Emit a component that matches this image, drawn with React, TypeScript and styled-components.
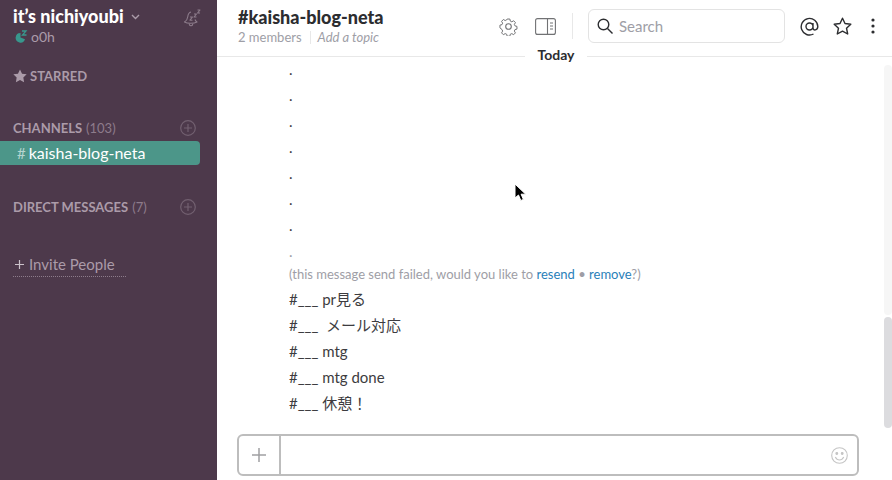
import React from 'react';
import styled, { createGlobalStyle } from 'styled-components';

const GlobalStyle = createGlobalStyle`
  html, body, #root {
    margin: 0;
    height: 100%;
  }
  body {
    overflow: hidden;
    font-family: Lato, "Noto Sans CJK JP", sans-serif;
    background: #fff;
  }
`;

const Page = styled.div`
  display: flex;
  width: 892px;
  height: 480px;
  overflow: hidden;
`;

const Sidebar = styled.aside`
  flex: 0 0 217px;
  display: flex;
  flex-direction: column;
  background: #4d394b;
  color: #ab9ba9;
`;

const TeamHeader = styled.div`
  display: flex;
  justify-content: space-between;
  height: 56px;
  padding: 3px 16px 0 13px;
  box-sizing: border-box;
`;

const TeamName = styled.div`
  display: flex;
  align-items: center;
  height: 25px;
  font-size: 18px;
  font-weight: 900;
  color: #fff;
  svg {
    margin-left: 7px;
    margin-top: 2px;
  }
`;

const UserRow = styled.div`
  display: flex;
  align-items: center;
  gap: 3px;
  margin: 0 0 0 2px;
  font-size: 14px;
  color: #ab9ba9;
`;

const BellButton = styled.div`
  margin-top: 6px;
  color: #8d7c8b;
`;

const SectionLabel = styled.div`
  display: flex;
  align-items: center;
  height: 20px;
  padding: 0 21px 0 13px;
  font-size: 13px;
  font-weight: 700;
  color: #ab9ba9;
  svg {
    margin-right: 3px;
  }
`;

const StarredSection = styled(SectionLabel)`
  margin-top: 10px;
`;

const ChannelsSection = styled(SectionLabel)`
  margin-top: 32px;
`;

const DirectSection = styled(SectionLabel)`
  margin-top: 32px;
`;

const LabelCount = styled.span`
  margin-left: 4px;
  font-weight: 400;
  color: #8d7c8b;
`;

const AddCircle = styled.div`
  margin-left: auto;
  display: flex;
  color: #726070;
  svg {
    margin-right: 0;
  }
`;

const ActiveChannel = styled.div`
  display: flex;
  align-items: center;
  width: 200px;
  height: 24px;
  margin-top: 3px;
  padding: 0 0 1px 17px;
  box-sizing: border-box;
  background: #4c9689;
  border-radius: 0 4px 4px 0;
  color: #fff;
  font-size: 16px;
`;

const Hash = styled.span`
  margin-right: 3px;
  font-size: 15px;
  color: #b5d5cf;
`;

const InviteLink = styled.div`
  display: flex;
  align-items: center;
  width: 113px;
  height: 24px;
  margin: 35px 0 0 13px;
  border-bottom: 1px dotted #8d7c8b;
  font-size: 15px;
  color: #ab9ba9;
  svg {
    margin: 0 5px 0 2px;
  }
`;

const Main = styled.main`
  position: relative;
  flex: 1;
  display: flex;
  flex-direction: column;
  min-width: 0;
`;

const Header = styled.header`
  flex: 0 0 57px;
  box-sizing: border-box;
  display: flex;
  padding: 0 17px 0 21px;
  border-bottom: 1px solid #e8e8e8;
`;

const ChannelInfo = styled.div`
  flex: 1;
  padding-top: 6px;
`;

const ChannelTitle = styled.div`
  height: 22px;
  line-height: 22px;
  font-size: 18px;
  font-weight: 900;
  color: #2c2d30;
`;

const ChannelMeta = styled.div`
  display: flex;
  align-items: center;
  height: 18px;
  font-size: 13px;
  color: #9e9ea6;
`;

const MetaDivider = styled.span`
  width: 1px;
  height: 13px;
  margin: 0 7px 0 8px;
  background: #e8e8e8;
`;

const Topic = styled.span`
  font-style: italic;
`;

const HeaderActions = styled.div`
  display: flex;
  align-items: center;
  height: 52px;
`;

const IconButton = styled.div<{ $dark?: boolean; $gap?: number }>`
  display: flex;
  margin-left: ${p => p.$gap || 0}px;
  color: ${p => (p.$dark ? '#2c2d30' : '#717274')};
`;

const ActionDivider = styled.div`
  width: 1px;
  height: 26px;
  margin: 0 15px 0 16px;
  background: #e8e8e8;
`;

const SearchBox = styled.div`
  display: flex;
  align-items: center;
  gap: 6px;
  width: 197px;
  height: 34px;
  box-sizing: border-box;
  padding-left: 8px;
  margin-right: 15px;
  border: 1px solid #e3e3e3;
  border-radius: 6px;
  color: #2c2d30;
`;

const SearchText = styled.span`
  font-size: 15px;
  color: #9e9ea6;
`;

const TodayLabel = styled.div`
  position: absolute;
  top: 46px;
  left: 308px;
  width: 62px;
  height: 18px;
  line-height: 18px;
  text-align: center;
  background: #fff;
  font-size: 14px;
  font-weight: 700;
  color: #2c2d30;
`;

const Messages = styled.div`
  flex: 1;
  display: flex;
  flex-direction: column;
  padding: 0 0 0 72px;
  margin-top: -1px;
  min-height: 0;
`;

const Line = styled.div<{ $muted?: boolean }>`
  height: 26px;
  line-height: 26px;
  font-size: 15px;
  color: ${p => (p.$muted ? '#9e9ea6' : '#3d3c40')};
`;

const FailedNote = styled.div`
  height: 16px;
  line-height: 16px;
  margin: 2px 0 4px;
  font-size: 13px;
  color: #9e9ea6;
`;

const NoteLink = styled.span`
  color: #2a80b9;
`;

const ScrollTrack = styled.div`
  position: absolute;
  top: 65px;
  right: 0;
  width: 8px;
  height: 250px;
  background: #f6f6f6;
  border-radius: 4px;
`;

const ScrollThumb = styled.div`
  position: absolute;
  top: 317px;
  right: 0;
  width: 8px;
  height: 111px;
  background: #dcdcdf;
  border-radius: 4px;
`;

const CursorMark = styled.svg`
  position: absolute;
  top: 183px;
  left: 297px;
`;

const Composer = styled.div`
  display: flex;
  height: 42px;
  box-sizing: border-box;
  margin: 0 33px 4px 20px;
  border: 2px solid #bdbdbd;
  border-radius: 6px;
`;

const AttachButton = styled.div`
  flex: 0 0 40px;
  display: flex;
  align-items: center;
  justify-content: center;
  border-right: 2px solid #bdbdbd;
  color: #a0a0a2;
`;

const ComposerInput = styled.div`
  flex: 1;
  display: flex;
  align-items: center;
  justify-content: flex-end;
  padding-right: 9px;
  color: #c5c5c5;
`;

const AddIcon = () => (
  <svg width="16" height="16" viewBox="0 0 16 16" fill="none" stroke="currentColor" strokeWidth="1.2">
    <circle cx="8" cy="8" r="7.3" />
    <path d="M8 4v8M4 8h8" />
  </svg>
);

const App: React.FC = () => {
  const dots = ['.', '.', '.', '.', '.', '.', '.'];
  return (
    <Page>
      <GlobalStyle />
      <Sidebar>
        <TeamHeader>
          <div>
            <TeamName>
              it’s nichiyoubi
              <svg width="9" height="6" viewBox="0 0 9 6" fill="none" stroke="#ab9ba9" strokeWidth="1.4">
                <path d="M1 1l3.500 3.500L8 1" />
              </svg>
            </TeamName>
            <UserRow>
              <svg width="13" height="13" viewBox="0 0 13 13">
                <path d="M5.500 3a4.800 4.800 0 1 0 4.500 6.300L5.500 7.500z" fill="#38978d" />
                <path d="M7 1h4L7.500 5h4" fill="none" stroke="#38978d" strokeWidth="1.3" />
              </svg>
              o0h
            </UserRow>
          </div>
          <BellButton>
            <svg width="18" height="18" viewBox="0 0 18 18" fill="none" stroke="currentColor" strokeWidth="1.1" strokeLinejoin="round">
              <path d="M8 3C5.500 3.500 5 5.500 4.700 8c-.3 2.500-1.200 3.800-3.200 5 1.500.9 3.800 1.300 6 1.300 2.500 0 5-.4 6.500-1.300-1-.7-1.700-1.400-2-2.500" />
              <path d="M6 14.500c.2 1.300 1 2.200 2 2.200s1.800-.9 2-2.200" />
              <path d="M7 8h2.500L7 11.200h2.500" />
              <path d="M11 5h2.500L11 8h2.500" />
              <path d="M14.500 1h2.500l-2.500 3H17" />
            </svg>
          </BellButton>
        </TeamHeader>
        <StarredSection>
          <svg width="14" height="14" viewBox="0 0 13 13" fill="#ab9ba9">
            <path d="M6.500.4l1.900 3.900 4.300.6-3.100 3 .7 4.300-3.800-2-3.800 2 .7-4.300-3.100-3 4.300-.6z" />
          </svg>
          STARRED
        </StarredSection>
        <ChannelsSection>
          CHANNELS<LabelCount>(103)</LabelCount>
          <AddCircle>
            <AddIcon />
          </AddCircle>
        </ChannelsSection>
        <ActiveChannel>
          <Hash>#</Hash>kaisha-blog-neta
        </ActiveChannel>
        <DirectSection>
          DIRECT MESSAGES<LabelCount>(7)</LabelCount>
          <AddCircle>
            <AddIcon />
          </AddCircle>
        </DirectSection>
        <InviteLink>
          <svg width="9" height="9" viewBox="0 0 9 9" stroke="#ccc3cb" strokeWidth="1.2">
            <path d="M4.500 0v9M0 4.500h9" />
          </svg>
          Invite People
        </InviteLink>
      </Sidebar>
      <Main>
        <Header>
          <ChannelInfo>
            <ChannelTitle>#kaisha-blog-neta</ChannelTitle>
            <ChannelMeta>
              2 members
              <MetaDivider />
              <Topic>Add a topic</Topic>
            </ChannelMeta>
          </ChannelInfo>
          <HeaderActions>
            <IconButton>
              <svg width="19" height="19" viewBox="0 0 19 19" fill="none" stroke="currentColor" strokeWidth="1.1" strokeLinejoin="round">
                <circle cx="9.500" cy="9.500" r="2.800" />
                <path d="M8 1.200h3l.5 2.300 1.700.8 2-1.200 2 2.100-1.200 2 .7 1.600 2.200.6v3l-2.200.5-.7 1.700 1.200 2-2 2-2-1.200-1.700.7-.5 2.200H8l-.5-2.200-1.700-.7-2 1.200-2-2 1.200-2-.7-1.700L0 11V8l2.300-.6.700-1.600-1.200-2 2-2.100 2 1.200 1.700-.8z" transform="translate(.95 .95) scale(.9)" />
              </svg>
            </IconButton>
            <IconButton $gap={17}>
              <svg width="21" height="17" viewBox="0 0 21 17" fill="none" stroke="currentColor" strokeWidth="1.1">
                <rect x=".6" y=".6" width="19.800" height="15.800" rx="2" />
                <path d="M12.500.6v15.800M15 5h3M15 8h3M15 11h3" />
              </svg>
            </IconButton>
            <ActionDivider />
            <SearchBox>
              <svg width="16" height="16" viewBox="0 0 16 16" fill="none" stroke="currentColor" strokeWidth="1.4">
                <circle cx="6.500" cy="6.500" r="5.300" />
                <path d="M10.500 10.500l5 5" />
              </svg>
              <SearchText>Search</SearchText>
            </SearchBox>
            <IconButton $dark>
              <svg width="19" height="19" viewBox="0 0 19 19" fill="none" stroke="currentColor" strokeWidth="1.4">
                <path d="M13 9.500a3.500 3.500 0 1 1-7 0 3.500 3.500 0 0 1 7 0zm0-3.500v5c0 3 4.800 2.500 4.800-1.500A8.300 8.300 0 1 0 13.500 17" />
              </svg>
            </IconButton>
            <IconButton $dark $gap={14}>
              <svg width="19" height="19" viewBox="0 0 19 19" fill="none" stroke="currentColor" strokeWidth="1.4" strokeLinejoin="round">
                <path d="M9.500 1.200l2.500 5.300 5.800.7-4.300 4 1.200 5.800-5.200-2.900-5.200 2.900 1.200-5.800-4.300-4 5.800-.7z" />
              </svg>
            </IconButton>
            <IconButton $dark $gap={19}>
              <svg width="4" height="16" viewBox="0 0 4 16" fill="currentColor">
                <circle cx="2" cy="2" r="1.6" />
                <circle cx="2" cy="8" r="1.6" />
                <circle cx="2" cy="14" r="1.6" />
              </svg>
            </IconButton>
          </HeaderActions>
        </Header>
        <TodayLabel>Today</TodayLabel>
        <Messages>
          {dots.map((d, i) => (
            <Line key={i}>{d}</Line>
          ))}
          <Line $muted>.</Line>
          <FailedNote>
            (this message send failed, would you like to <NoteLink>resend</NoteLink> • <NoteLink>remove</NoteLink>?)
          </FailedNote>
          <Line>#___ pr見る</Line>
          <Line>#___ &nbsp;メール対応</Line>
          <Line>#___ mtg</Line>
          <Line>#___ mtg done</Line>
          <Line>#___ 休憩！</Line>
        </Messages>
        <ScrollTrack />
        <ScrollThumb />
        <CursorMark width="13" height="20" viewBox="0 0 13 20">
          <path d="M1 1v14l3.500-3 2.300 5.500 2.600-1.100-2.300-5.200h4.600z" fill="#000" stroke="#fff" strokeWidth="1" />
        </CursorMark>
        <Composer>
          <AttachButton>
            <svg width="14" height="14" viewBox="0 0 14 14" stroke="currentColor" strokeWidth="1.5">
              <path d="M7 0v14M0 7h14" />
            </svg>
          </AttachButton>
          <ComposerInput>
            <svg width="17" height="17" viewBox="0 0 17 17" fill="none" stroke="currentColor" strokeWidth="1.1">
              <circle cx="8.500" cy="8.500" r="7.800" />
              <circle cx="5.800" cy="6.500" r=".9" fill="currentColor" />
              <circle cx="11.200" cy="6.500" r=".9" fill="currentColor" />
              <path d="M4.300 10c1 2 2.500 3 4.200 3s3.200-1 4.200-3" />
            </svg>
          </ComposerInput>
        </Composer>
      </Main>
    </Page>
  );
};

export default App;
